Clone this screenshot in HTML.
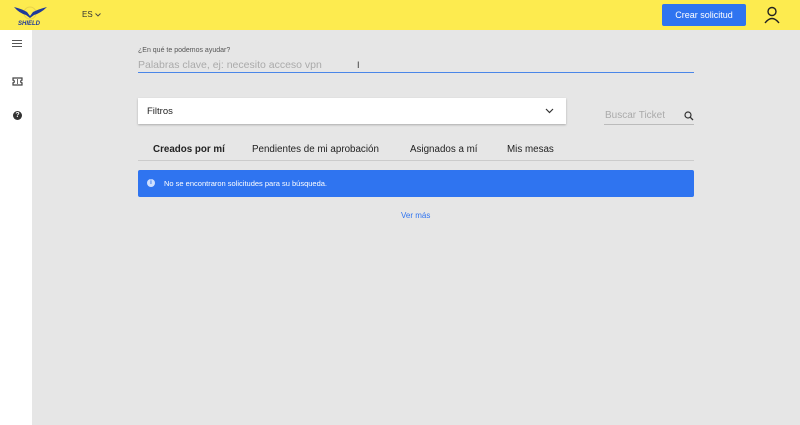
<!DOCTYPE html>
<html><head><meta charset="utf-8"><style>
*{margin:0;padding:0;box-sizing:border-box}
body{width:800px;height:425px;overflow:hidden;background:#e6e6e6;font-family:"Liberation Sans",sans-serif;position:relative}
.top{position:absolute;left:0;top:0;width:800px;height:30px;background:#fdeb4f}
.side{position:absolute;left:0;top:30px;width:32px;height:395px;background:#fff}
.abs{position:absolute}
</style></head><body>
<div class="top">
  <svg class="abs" style="left:13px;top:4px" width="36" height="22" viewBox="0 0 36 22">
    <circle cx="17" cy="9" r="6" fill="none" stroke="#e8d24a" stroke-width="1"/>
    <path d="M1 3 Q9 5 14 8 L17 12 L20 8 Q26 5 34 3 Q28 9 21 11 L17 14 L13 11 Q6 9 1 3Z" fill="#1f3a9a"/>
    <text x="5" y="21" font-size="6" font-weight="bold" font-style="italic" fill="#1f3a9a" font-family="Liberation Sans">SHIELD</text>
  </svg>
  <div class="abs" style="left:82px;top:10px;font-size:8px;color:#333">ES</div>
  <svg class="abs" style="left:95px;top:13px" width="6" height="4" viewBox="0 0 6 4"><path d="M0.5 0.5 L3 3 L5.5 0.5" fill="none" stroke="#444" stroke-width="0.9"/></svg>
  <div class="abs" style="left:662px;top:4px;width:84px;height:22px;background:#2f74f0;border-radius:2px;color:#fff;font-size:9px;text-align:center;line-height:22px">Crear solicitud</div>
  <svg class="abs" style="left:764px;top:6px" width="16" height="18" viewBox="0 0 16 18"><circle cx="8" cy="5.5" r="4" fill="none" stroke="#222" stroke-width="1.4"/><path d="M1 17 Q8 8 15 17" fill="none" stroke="#222" stroke-width="1.4"/></svg>
</div>
<div class="side">
  <div class="abs" style="left:12px;top:10px;width:10px;height:7px;border-top:1px solid #555;border-bottom:1px solid #555"><div style="margin-top:2px;border-top:1px solid #555"></div></div>
  <svg class="abs" style="left:12px;top:47px" width="11" height="9" viewBox="0 0 11 9"><path d="M1 1 H10 V3.2 A1.3 1.3 0 0 0 10 5.8 V8 H1 V5.8 A1.3 1.3 0 0 0 1 3.2 Z" fill="none" stroke="#444" stroke-width="1.2"/><path d="M5.5 2 V7" stroke="#444" stroke-width="0.8"/></svg>
  <div class="abs" style="left:13px;top:81px;width:9px;height:9px;border-radius:50%;background:#333;color:#fff;font-size:7px;line-height:9px;text-align:center;font-weight:bold">?</div>
</div>
<div class="abs" style="left:138px;top:47px;font-size:7px;color:#555">¿En qué te podemos ayudar?</div>
<div class="abs" style="left:138px;top:59px;font-size:10.5px;color:#aaa">Palabras clave, ej: necesito acceso vpn</div>
<div class="abs" style="left:138px;top:72px;width:556px;height:1px;background:#4a86e8"></div>
<div class="abs" style="left:357px;top:60px;font-size:9px;color:#333">I</div>
<div class="abs" style="left:138px;top:98px;width:428px;height:26px;background:#fff;box-shadow:0 1px 2px rgba(0,0,0,.25)">
  <div class="abs" style="left:9px;top:8px;font-size:9.5px;color:#222">Filtros</div>
  <svg class="abs" style="left:407px;top:10px" width="9" height="6" viewBox="0 0 9 6"><path d="M1 1 L4.5 4.5 L8 1" fill="none" stroke="#333" stroke-width="1.2"/></svg>
</div>
<div class="abs" style="left:605px;top:110px;font-size:10px;color:#aaa">Buscar Ticket</div>
<svg class="abs" style="left:684px;top:111px" width="10" height="10" viewBox="0 0 10 10"><circle cx="4" cy="4" r="3" fill="none" stroke="#333" stroke-width="1.2"/><path d="M6.2 6.2 L9 9" stroke="#333" stroke-width="1.3"/></svg>
<div class="abs" style="left:604px;top:124px;width:90px;height:1px;background:#bbb"></div>
<div class="abs" style="left:153px;top:144px;font-size:9.8px;font-weight:bold;color:#222">Creados por mí</div>
<div class="abs" style="left:252px;top:144px;font-size:9.8px;color:#222">Pendientes de mi aprobación</div>
<div class="abs" style="left:410px;top:144px;font-size:9.8px;color:#222">Asignados a mí</div>
<div class="abs" style="left:507px;top:144px;font-size:9.8px;color:#222">Mis mesas</div>
<div class="abs" style="left:138px;top:160px;width:556px;height:1px;background:#ccc"></div>
<div class="abs" style="left:138px;top:170px;width:556px;height:27px;background:#2f74f0;border-radius:2px">
  <div class="abs" style="left:9px;top:9px;width:8px;height:8px;border-radius:50%;background:#cfe0ff;color:#2f74f0;font-size:6px;line-height:8px;text-align:center;font-weight:bold">i</div>
  <div class="abs" style="left:26px;top:9px;font-size:7.5px;color:#fff">No se encontraron solicitudes para su búsqueda.</div>
</div>
<div class="abs" style="left:401px;top:211px;font-size:8px;color:#2f74f0">Ver más</div>
</body></html>
